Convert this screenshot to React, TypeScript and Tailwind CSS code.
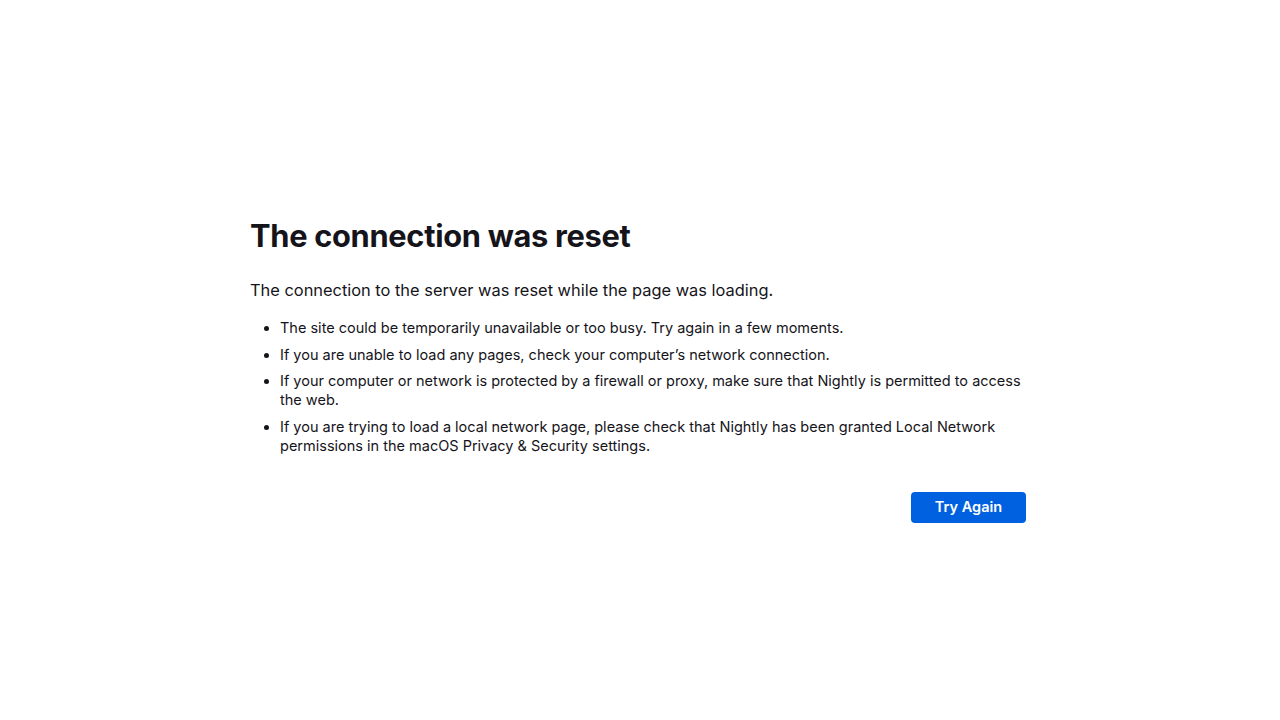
export default function App() {
  const items = [
    "The site could be temporarily unavailable or too busy. Try again in a few moments.",
    "If you are unable to load any pages, check your computer\u2019s network connection.",
    "If your computer or network is protected by a firewall or proxy, make sure that Nightly is permitted to access the web.",
    "If you are trying to load a local network page, please check that Nightly has been granted Local Network permissions in the macOS Privacy & Security settings.",
  ];
  return (
    <div className="w-[1280px] h-[720px] bg-white text-[#15141a] pl-[250px]" style={{ fontFamily: "Inter, 'Noto Sans', sans-serif" }}>
      <div className="w-[776px] pt-[216px]">
        <h1 className="text-[30.8px] leading-[40px] font-bold tracking-[-0.3px]">The connection was reset</h1>
        <p className="mt-[22px] text-[16.4px] leading-[24px]">The connection to the server was reset while the page was loading.</p>
        <ul className="mt-[16px] pl-[30px] list-disc text-[14.5px] leading-[19px] flex flex-col gap-[7.5px]">
          {items.map((t, i) => (
            <li key={i}>{t}</li>
          ))}
        </ul>
        <div className="flex justify-end mt-[37px]">
          <button className="w-[115px] h-[31px] rounded-[4px] bg-[#0061e0] text-white text-[14.5px] font-semibold">Try Again</button>
        </div>
      </div>
    </div>
  );
}
